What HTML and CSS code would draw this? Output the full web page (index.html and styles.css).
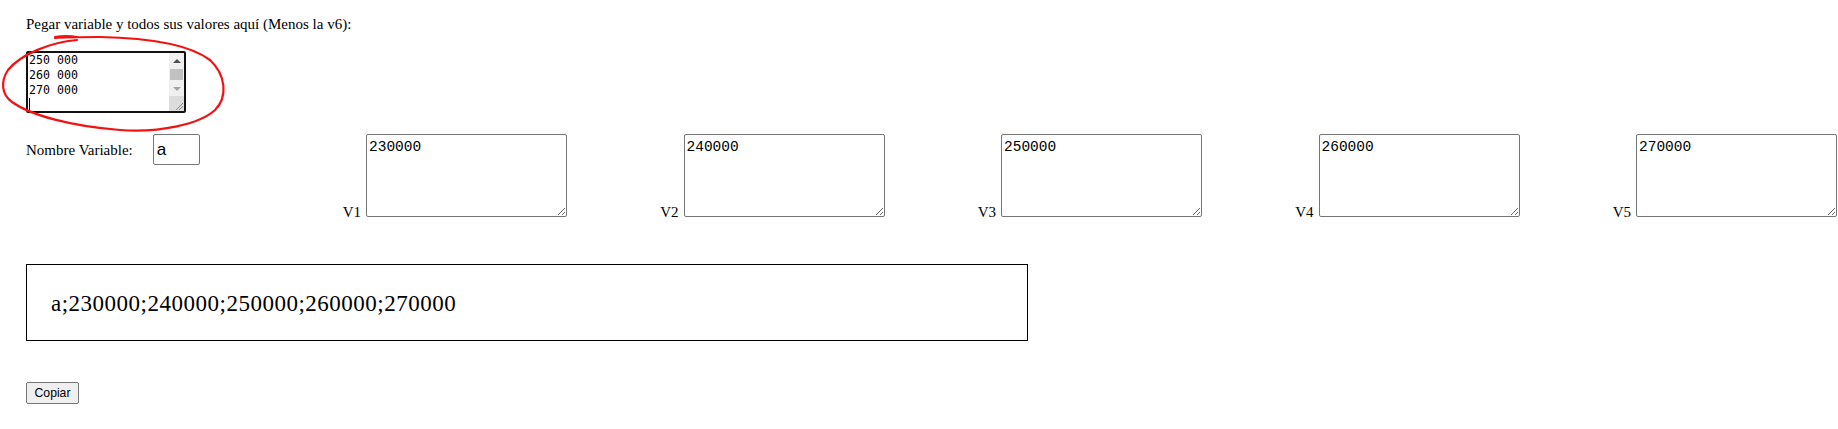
FILE: index.html
```html
<!DOCTYPE html>
<html lang="es">
<head>
    <meta charset="UTF-8">
    <meta name="viewport" content="width=device-width, initial-scale=1.0">
    <title>Unir variable</title>
    <link rel="stylesheet" href="styles.css">
</head>
<body>
    <div class="page">
        <!-- red pen mark drawn over the paste box -->
        <svg class="scribble" width="240" height="140" viewBox="0 0 240 140">
            <path d="M77 40 C50 42, 20 55, 8 70 C0 82, 2 95, 12 102 C30 115, 70 126, 120 130 C160 133, 200 124, 215 110 C228 97, 226 75, 210 60 C190 45, 150 38, 100 37 C80 37, 65 37, 55 38" />
            <path d="M55 37 C62 36, 70 36, 77 37" />
        </svg>

        <p class="intro">Pegar variable y todos sus valores aquí (Menos la v6):</p>

        <div class="paste-box">
            <textarea class="paste-input" spellcheck="false">250 000
260 000
270 000
</textarea>
            <span class="caret"></span>
            <div class="fake-scroll">
                <div class="sb-btn"><span class="arrow-up"></span></div>
                <div class="sb-track"><div class="sb-thumb"></div></div>
                <div class="sb-btn"><span class="arrow-down"></span></div>
                <div class="sb-corner">
                    <svg width="15" height="15" viewBox="0 0 15 15">
                        <line x1="14" y1="7" x2="7" y2="14" />
                        <line x1="14" y1="10" x2="10" y2="14" />
                    </svg>
                </div>
            </div>
        </div>

        <div class="vars-row">
            <div class="name-cell">
                <label class="name-label">Nombre Variable:</label><input type="text" class="name-input" value="a">
            </div>
            <div class="val-cell"><label class="val-label">V1</label><textarea class="val-input" spellcheck="false">230000</textarea></div>
            <div class="val-cell"><label class="val-label">V2</label><textarea class="val-input" spellcheck="false">240000</textarea></div>
            <div class="val-cell"><label class="val-label">V3</label><textarea class="val-input" spellcheck="false">250000</textarea></div>
            <div class="val-cell"><label class="val-label">V4</label><textarea class="val-input" spellcheck="false">260000</textarea></div>
            <div class="val-cell"><label class="val-label">V5</label><textarea class="val-input" spellcheck="false">270000</textarea></div>
        </div>

        <div class="result" id="result">a;230000;240000;250000;260000;270000</div>

        <button type="button" class="btn-copy">Copiar</button>
    </div>
</body>
</html>
```

FILE: styles.css
```css
body {
    margin: 0;
    font-family: 'Liberation Serif', 'Times New Roman', serif;
    font-size: 15px;
    line-height: 17px;
    color: #000;
    background: #fff;
}

.page {
    position: relative;
    padding: 16px 0 0 26px;
}

.scribble {
    position: absolute;
    left: 0;
    top: 0;
    pointer-events: none;
    z-index: 2;
}

.scribble path {
    fill: none;
    stroke: #f21212;
    stroke-width: 2.2;
    stroke-linecap: round;
}

.intro {
    margin: 0;
}

/* paste box with the old style scrollbar */
.paste-box {
    position: relative;
    display: flex;
    box-sizing: border-box;
    width: 160px;
    height: 62px;
    margin-top: 18px;
    border: 2px solid #111;
    border-radius: 2px;
    background: #fff;
}

.paste-input {
    flex: 1;
    border: none;
    outline: none;
    resize: none;
    overflow: hidden;
    margin: 0;
    padding: 0 1px;
    font-family: 'DejaVu Sans Mono', monospace;
    font-size: 11.6px;
    line-height: 15px;
    color: #000;
}

.caret {
    position: absolute;
    left: 1px;
    top: 45px;
    width: 1px;
    height: 14px;
    background: #000;
}

.fake-scroll {
    width: 15px;
    display: flex;
    flex-direction: column;
    background: #f0f0f0;
}

.sb-btn {
    height: 15px;
    display: flex;
    align-items: center;
    justify-content: center;
}

.arrow-up {
    border-left: 4px solid transparent;
    border-right: 4px solid transparent;
    border-bottom: 4px solid #505050;
}

.arrow-down {
    border-left: 4px solid transparent;
    border-right: 4px solid transparent;
    border-top: 4px solid #a3a3a3;
}

.sb-track {
    flex: 1;
    padding: 1px 1px;
}

.sb-thumb {
    height: 11px;
    background: #c1c1c1;
}

.sb-corner {
    height: 15px;
    background: #dcdcdc;
}

.sb-corner svg {
    display: block;
}

.sb-corner line {
    stroke: #8a8a8a;
    stroke-width: 1;
}

/* name + five values */
.vars-row {
    display: grid;
    grid-template-columns: 223.5px repeat(5, 317.5px);
    align-items: start;
    margin-top: 21px;
}

.name-label {
    margin-right: 20px;
}

.name-input {
    box-sizing: border-box;
    width: 47px;
    height: 31px;
    margin: 0;
    padding: 0 3px;
    border: 1px solid #767676;
    border-radius: 2px;
    font-family: 'Liberation Sans', Arial, sans-serif;
    font-size: 17px;
    color: #000;
}

.val-cell {
    justify-self: end;
}

.val-label {
    margin-right: 5px;
}

.val-input {
    box-sizing: border-box;
    width: 201px;
    height: 83px;
    margin: 0;
    padding: 4px 2px;
    border: 1px solid #767676;
    border-radius: 2px;
    font-family: 'Liberation Mono', monospace;
    font-size: 14.5px;
    color: #000;
}

.result {
    box-sizing: border-box;
    width: 1002px;
    height: 77px;
    margin-top: 43px;
    padding: 26px 24px 0;
    border: 1px solid #000;
    font-size: 23px;
    line-height: 25px;
    letter-spacing: 0.5px;
}

.btn-copy {
    display: block;
    box-sizing: border-box;
    width: 53px;
    height: 22px;
    margin-top: 41px;
    padding: 0;
    border: 1px solid #767676;
    border-radius: 2px;
    background: #efefef;
    font-family: 'Liberation Sans', Arial, sans-serif;
    font-size: 12.2px;
    color: #000;
    cursor: pointer;
}

.btn-copy:hover {
    background: #e5e5e5;
}
```
